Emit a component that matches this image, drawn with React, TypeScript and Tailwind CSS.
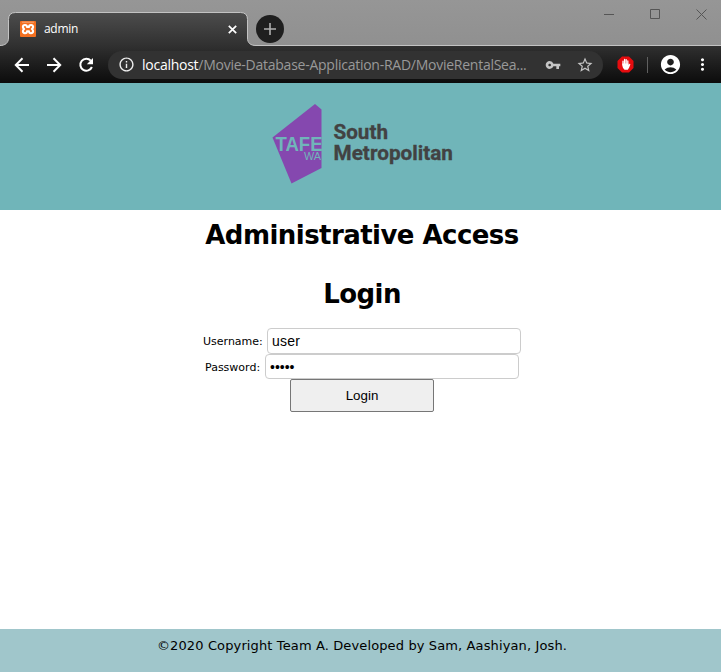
import React from "react";
import {
  MdAccountCircle,
  MdInfoOutline,
  MdMoreVert,
  MdStarBorder,
  MdVpnKey,
} from "react-icons/md";

function XamppIcon() {
  return (
    <svg width="16" height="16" viewBox="0 0 16 16" className="shrink-0">
      <rect width="16" height="16" rx="1" fill="#f37021" />
      <path d="M2 1.200h12" stroke="#f9c09a" strokeWidth="0.700" />
      <path
        d="M5 4C3.400 4 2.900 5 2.900 6s.6 1.500 1.200 2c-.6.5-1.200 1.200-1.200 2.100S3.400 12.200 5 12.200 7 11 7 10.200h2c0 .8.400 2 2 2s2.100-1.200 2.100-2.100-.6-1.600-1.200-2.100c.6-.5 1.200-1 1.200-2S12.600 4 11 4 9 5.200 9 6H7c0-.8-.4-2-2-2z"
        fill="none"
        stroke="#fff"
        strokeWidth="2.100"
        strokeLinejoin="round"
      />
    </svg>
  );
}

function BlockerIcon() {
  return (
    <svg width="17" height="17" viewBox="0 0 17 17">
      <path d="M5 .5h7L16.500 5v7L12 16.500H5L.5 12V5z" fill="#e60c0f" />
      <path
        d="M6 9V5.200M7.600 8.500V3.500M9.200 8.500V3.600M10.800 9V5"
        stroke="#fff"
        strokeWidth="1.300"
        strokeLinecap="round"
      />
      <path d="M5.400 7.500h6v1.600l1.200-1.300c.5-.2.9.2.700.700-.5 1.600-1.300 3.800-2.500 5.200H7.600C6.200 12.700 5.400 11 5.400 9z" fill="#fff" />
    </svg>
  );
}

function TabStrip() {
  return (
    <div className="relative flex h-[45px]">
      <svg className="absolute left-0 top-0" width="721" height="46" viewBox="0 0 721 46">
        <defs>
          <linearGradient id="tab" x1="0" y1="12" x2="0" y2="46" gradientUnits="userSpaceOnUse">
            <stop offset="0" stopColor="#4d4d4d" />
            <stop offset="1" stopColor="#303030" />
          </linearGradient>
        </defs>
        <path
          d="M0 45.500C5 45.500 8.500 43 8.500 38V19.500Q8.500 12.500 15.500 12.500H240.500Q247.500 12.500 247.500 19.500V38C247.500 43 250.500 45.500 256 45.500V47H0z"
          fill="url(#tab)"
        />
        <path
          d="M0 45.500C5 45.500 8.500 43 8.500 38V19.500Q8.500 12.500 15.500 12.500H240.500Q247.500 12.500 247.500 19.500V38C247.500 43 250.500 45.500 256 45.500H721"
          fill="none"
          stroke="#c3c3c3"
        />
      </svg>
      <div className="relative ml-5 mt-[21px] flex h-4 w-[220px] items-center text-white">
        <XamppIcon />
        <span className="ml-2 font-['Open_Sans',sans-serif] text-[12px] leading-4 tracking-[-0.3px]">admin</span>
        <svg width="9" height="9" viewBox="0 0 9 9" className="ml-auto mr-[3px]">
          <path d="M.8.800l7.400 7.400M8.200.800L.8 8.200" stroke="#fff" strokeWidth="1.700" />
        </svg>
      </div>
      <div className="relative ml-4 mt-[15px] flex size-7 items-center justify-center rounded-full bg-[#1f1f1f]">
        <svg width="12" height="12" viewBox="0 0 12 12">
          <path d="M6 0v12M0 6h12" stroke="#b0b0b0" strokeWidth="1.600" />
        </svg>
      </div>
      <svg className="relative ml-auto mr-[9px] mt-2" width="108" height="12" viewBox="0 0 108 12" fill="none" stroke="#555">
        <path d="M0 6.500h10M46.500 1.500h9v9h-9zM92.500 1.500l10 10M102.500 1.500l-10 10" />
      </svg>
    </div>
  );
}

function NavIcons() {
  return (
    <svg width="108" height="16" viewBox="0 0 108 16" fill="none" stroke="#fff" strokeWidth="2">
      <path d="M29 8H16.500M22.500 1.300L15.800 8l6.700 6.700" />
      <path d="M47 8h12.500M53.500 1.300L60.200 8l-6.700 6.700" />
      <path d="M90.800 3.700A6 6 0 1 0 91.900 10" />
      <path d="M93 1v6.200h-6.200z" fill="#fff" stroke="none" />
    </svg>
  );
}

function Toolbar() {
  return (
    <div className="flex h-[38px] items-center border-t border-[#c3c3c3] bg-linear-to-b from-[#303030] to-[#0c0c0c] text-white">
      <NavIcons />
      <div className="flex h-7 w-[495px] items-center rounded-full bg-[#323232]">
        <MdInfoOutline size={17} className="ml-[9.500px] shrink-0 text-[#eeeeee]" />
        <span className="ml-[7.500px] w-[390px] whitespace-nowrap font-['Open_Sans',sans-serif] text-[14px] leading-5 tracking-[-0.255px] text-[#999999]">
          <span className="text-white">localhost</span>/Movie-Database-Application-RAD/MovieRentalSea...
        </span>
        <MdVpnKey size={16} className="ml-[13px] shrink-0 text-[#c4c4c4]" />
        <MdStarBorder size={18} className="ml-[15px] shrink-0 text-[#c4c4c4]" />
      </div>
      <div className="ml-[13.500px]">
        <BlockerIcon />
      </div>
      <div className="ml-[13.500px] h-4 w-px bg-[#606060]" />
      <MdAccountCircle size={23} className="ml-[10.500px]" />
      <MdMoreVert size={19} className="ml-[11px]" />
    </div>
  );
}

function TafeLogo() {
  return (
    <svg width="190" height="82" viewBox="0 0 190 82">
      <path d="M0.500 34.500L43 1l6.500 5.500V65L19.500 80.500z" fill="#8548af" />
      <g fontFamily="'Liberation Sans', sans-serif" fill="#70b5b9">
        <text x="3.500" y="48" fontSize="20" fontWeight="700" textLength="47" lengthAdjust="spacingAndGlyphs">
          TAFE
        </text>
        <text x="32" y="57.300" fontSize="11" textLength="17" lengthAdjust="spacingAndGlyphs">
          WA
        </text>
      </g>
      <g fontFamily="Roboto, sans-serif" fontWeight="700" fontSize="20" fill="#424242" stroke="#424242" strokeWidth="0.300">
        <text x="61.500" y="35.700" textLength="54.500" lengthAdjust="spacingAndGlyphs">
          South
        </text>
        <text x="61.500" y="57.300" textLength="119.500" lengthAdjust="spacingAndGlyphs">
          Metropolitan
        </text>
      </g>
    </svg>
  );
}

export default function App() {
  return (
    <div className="flex h-[672px] w-[721px] flex-col overflow-hidden bg-white font-['DejaVu_Sans',Verdana,sans-serif] text-black">
      <div className="bg-linear-to-b from-[#969696] to-[#8b8b8b]">
        <TabStrip />
        <Toolbar />
      </div>
      <header className="h-[127px] bg-[#70b5b9] pl-[272px] pt-5">
        <TafeLogo />
      </header>
      <main className="flex flex-1 flex-col items-center pl-[3px] pt-[9px]">
        <h1 className="text-[26px] font-bold leading-8 tracking-[-0.55px]">Administrative Access</h1>
        <h1 className="mt-[27px] text-[26px] font-bold leading-8 tracking-[-0.55px]">Login</h1>
        <div className="mt-[18px] flex h-[26px] items-center">
          <label htmlFor="username" className="mr-1 w-[60px] whitespace-nowrap pt-[2px] text-[11px] leading-4">
            Username:
          </label>
          <input
            id="username"
            defaultValue="user"
            className="h-[26px] w-[254px] rounded-[4px] border border-[#cccccc] bg-white px-1 font-['Liberation_Sans',Arial,sans-serif] text-[14px] tracking-[0.2px] outline-none"
          />
        </div>
        <div className="flex h-[25px] items-center">
          <label htmlFor="password" className="mr-1 w-[56px] whitespace-nowrap pt-[2px] text-[11px] leading-4">
            Password:
          </label>
          <input
            id="password"
            type="password"
            defaultValue="admin"
            className="h-[25px] w-[254px] rounded-[4px] border border-[#cccccc] bg-white px-1 font-['Liberation_Sans',Arial,sans-serif] text-[14px] outline-none"
          />
        </div>
        <button className="h-[33px] w-[144px] rounded-[2px] border border-[#767676] bg-[#efefef] font-['Liberation_Sans',Arial,sans-serif] text-[13.333px]">
          Login
        </button>
      </main>
      <footer className="flex h-[43px] justify-center bg-[#a0c6cb] pl-[3px] pt-2">
        <p className="whitespace-nowrap text-[13px] leading-[18px] tracking-[0.125px]">
          ©2020 Copyright Team A. Developed by Sam, Aashiyan, Josh.
        </p>
      </footer>
    </div>
  );
}
